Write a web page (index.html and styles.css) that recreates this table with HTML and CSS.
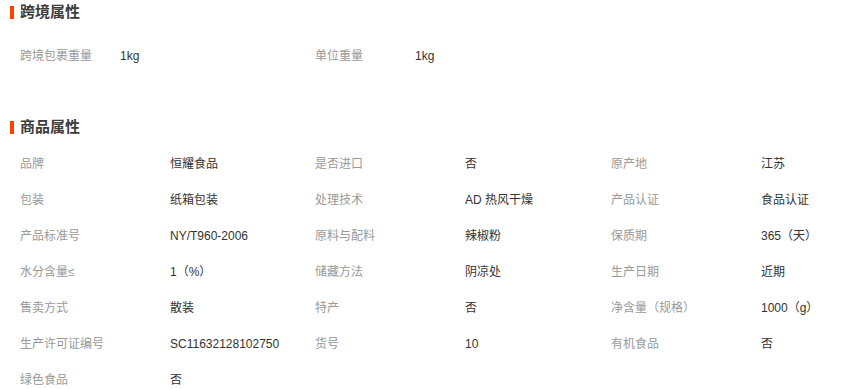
FILE: index.html
```html
<!DOCTYPE html>
<html lang="zh-CN">
<head>
<meta charset="utf-8">
<title>属性</title>
<link rel="stylesheet" href="styles.css">
</head>
<body>
<div class="page">
  <section class="sec sec-cross">
    <h3 class="sec-title"><span class="bar"></span><span class="t">跨境属性</span></h3>
    <ul class="attrs attrs-cross">
      <li class="attr"><span class="k">跨境包裹重量</span><span class="v">1kg</span></li>
      <li class="attr"><span class="k">单位重量</span><span class="v">1kg</span></li>
    </ul>
  </section>
  <section class="sec sec-goods">
    <h3 class="sec-title"><span class="bar"></span><span class="t">商品属性</span></h3>
    <ul class="attrs attrs-goods">
      <li class="attr"><span class="k">品牌</span><span class="v">恒耀食品</span></li>
      <li class="attr"><span class="k">是否进口</span><span class="v">否</span></li>
      <li class="attr"><span class="k">原产地</span><span class="v">江苏</span></li>
      <li class="attr"><span class="k">包装</span><span class="v">纸箱包装</span></li>
      <li class="attr"><span class="k">处理技术</span><span class="v">AD 热风干燥</span></li>
      <li class="attr"><span class="k">产品认证</span><span class="v">食品认证</span></li>
      <li class="attr"><span class="k">产品标准号</span><span class="v">NY/T960-2006</span></li>
      <li class="attr"><span class="k">原料与配料</span><span class="v">辣椒粉</span></li>
      <li class="attr"><span class="k">保质期</span><span class="v">365（天）</span></li>
      <li class="attr"><span class="k">水分含量≤</span><span class="v">1（%）</span></li>
      <li class="attr"><span class="k">储藏方法</span><span class="v">阴凉处</span></li>
      <li class="attr"><span class="k">生产日期</span><span class="v">近期</span></li>
      <li class="attr"><span class="k">售卖方式</span><span class="v">散装</span></li>
      <li class="attr"><span class="k">特产</span><span class="v">否</span></li>
      <li class="attr"><span class="k">净含量（规格）</span><span class="v">1000（g）</span></li>
      <li class="attr"><span class="k">生产许可证编号</span><span class="v">SC11632128102750</span></li>
      <li class="attr"><span class="k">货号</span><span class="v">10</span></li>
      <li class="attr"><span class="k">有机食品</span><span class="v">否</span></li>
      <li class="attr"><span class="k">绿色食品</span><span class="v">否</span></li>
    </ul>
  </section>
</div>
</body>
</html>
```
FILE: styles.css
```css
html, body {
  margin: 0;
  padding: 0;
  background: #fff;
  overflow: hidden;
}
body {
  font-family: "Liberation Sans", "Noto Sans CJK SC", sans-serif;
  font-size: 12px;
  color: #333;
}
.page {
  padding: 0 0 0 10px;
}
.sec-title {
  display: flex;
  align-items: flex-start;
  gap: 6px;
  margin: 0;
  height: 26px;
  font-size: 15px;
  font-weight: bold;
  color: #3c3c3c;
  font-family: "Noto Sans CJK SC", sans-serif;
}
.t {
  line-height: 22px;
}
.bar {
  width: 4px;
  height: 13px;
  margin-top: 6px;
  background: #ff4400;
}
.attrs {
  list-style: none;
  margin: 0;
  padding: 0 0 0 10px;
  display: grid;
}
.attrs-cross {
  padding-top: 12px;
  grid-template-columns: 295px 295px;
}
.attrs-cross .k {
  width: 100px;
}
.sec-goods {
  margin-top: 41px;
}
.attrs-goods {
  padding-top: 5px;
  grid-template-columns: 295px 296px 240px;
}
.attr {
  display: flex;
  height: 36px;
  line-height: 36px;
  white-space: nowrap;
}
.k {
  width: 150px;
  flex: none;
  color: #999;
}
.v {
  color: #333;
}
```
